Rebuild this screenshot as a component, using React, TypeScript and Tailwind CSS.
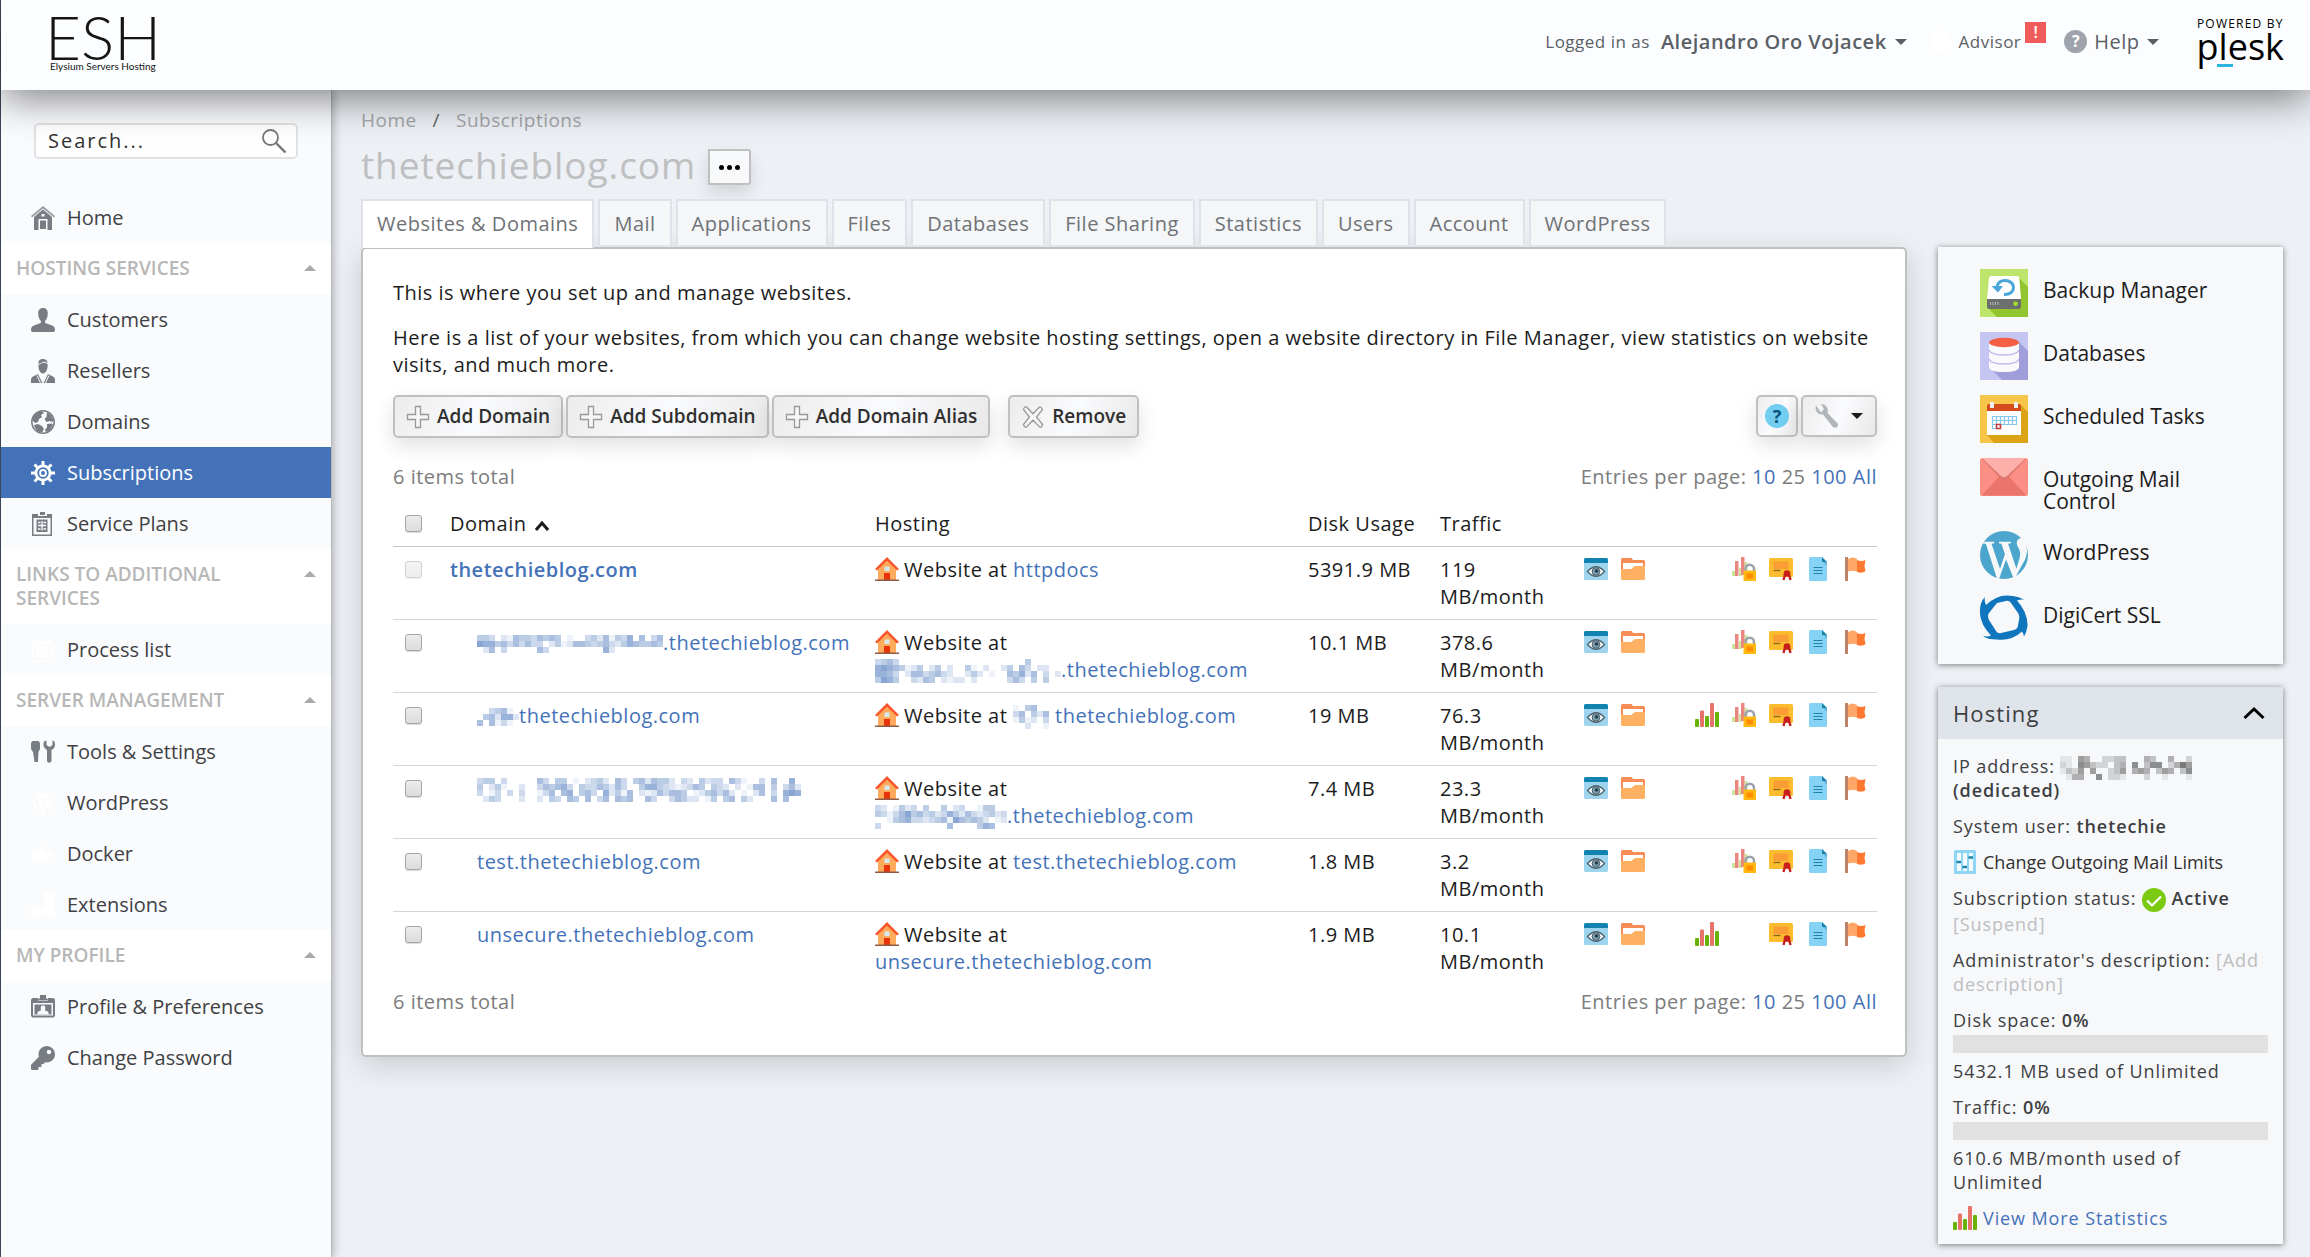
import React, { useState } from 'react';
import { FaDocker, FaKey, FaWordpress } from 'react-icons/fa';

type IconName =
  | 'home' | 'user' | 'reseller' | 'globe' | 'gear' | 'plan' | 'list'
  | 'tools' | 'wordpress' | 'docker' | 'extensions' | 'profile' | 'key';

type Section = { title?: string; items: { label: string; icon: IconName }[] };

const sections: Section[] = [
  { items: [{ label: 'Home', icon: 'home' }] },
  {
    title: 'HOSTING SERVICES',
    items: [
      { label: 'Customers', icon: 'user' },
      { label: 'Resellers', icon: 'reseller' },
      { label: 'Domains', icon: 'globe' },
      { label: 'Subscriptions', icon: 'gear' },
      { label: 'Service Plans', icon: 'plan' },
    ],
  },
  { title: 'LINKS TO ADDITIONAL SERVICES', items: [{ label: 'Process list', icon: 'list' }] },
  {
    title: 'SERVER MANAGEMENT',
    items: [
      { label: 'Tools & Settings', icon: 'tools' },
      { label: 'WordPress', icon: 'wordpress' },
      { label: 'Docker', icon: 'docker' },
      { label: 'Extensions', icon: 'extensions' },
    ],
  },
  {
    title: 'MY PROFILE',
    items: [
      { label: 'Profile & Preferences', icon: 'profile' },
      { label: 'Change Password', icon: 'key' },
    ],
  },
];

const tabs = ['Websites & Domains', 'Mail', 'Applications', 'Files', 'Databases', 'File Sharing', 'Statistics', 'Users', 'Account', 'WordPress'];

// Hidden names are kept as rows of digits, 0 is empty and 9 is the darkest cell
const masks = {
  a: ['4430215443545401003425143605035', '7664535353302412554345324654454', '0250300000530000000006200000000'],
  b: ['3453000000000000000000000400000', '6765412402402004102002405302200', '6653025534532002420100546250302', '4764003254021220200000353040400'],
  c: ['0034510', '0452662', '5051310'],
  d: ['1045000', '3504250', '1412030', '0020010'],
  e: [
    '344030000053044010234205304525442032042330531003050060',
    '402410020035456304335425300466432123540432020155040352',
    '301303030013505604530624150212535540124535201025030676',
    '024300020020430540503505450053003542201404504200050500',
  ],
  f: ['3201423040040230014400', '4313574534236425323423', '0014563323451754542012', '3000000000005000046500'],
  ip: ['1105400223300043004002', '2106532203406036602475', '1325050023504540354036', '0144006022100020010001'],
};

type Row = {
  name: string;
  mask?: keyof typeof masks;
  host: string;
  hostMask?: keyof typeof masks;
  disk: string;
  traffic: string;
  stats?: boolean;
  sslStats?: boolean;
  main?: boolean;
};

const rows: Row[] = [
  { name: 'thetechieblog.com', host: 'httpdocs', disk: '5391.9 MB', traffic: '119', sslStats: true, main: true },
  { name: '.thetechieblog.com', mask: 'a', host: '.thetechieblog.com', hostMask: 'b', disk: '10.1 MB', traffic: '378.6', sslStats: true },
  { name: 'thetechieblog.com', mask: 'c', host: 'thetechieblog.com', hostMask: 'd', disk: '19 MB', traffic: '76.3', stats: true, sslStats: true },
  { name: '', mask: 'e', host: '.thetechieblog.com', hostMask: 'f', disk: '7.4 MB', traffic: '23.3', sslStats: true },
  { name: 'test.thetechieblog.com', host: 'test.thetechieblog.com', disk: '1.8 MB', traffic: '3.2', sslStats: true },
  { name: 'unsecure.thetechieblog.com', host: 'unsecure.thetechieblog.com', disk: '1.9 MB', traffic: '10.1', stats: true },
];

function Mask({ id, color = '#4472b9' }: { id: keyof typeof masks; color?: string }) {
  const grid = masks[id];
  const cell = 6;
  return (
    <svg width={grid[0].length * cell} height={grid.length * cell} className="inline-block align-middle -my-1" fill={color} shapeRendering="crispEdges" aria-hidden="true">
      {grid.map((r, y) =>
        r.split('').map((c, x) => (
          <rect key={`${x}-${y}`} x={x * cell} y={y * cell} width={cell} height={cell} opacity={Number(c) / 11} />
        ))
      )}
    </svg>
  );
}

function NavIcon({ name }: { name: IconName }) {
  const faint = 'w-6 h-6 shrink-0 text-white';
  if (name === 'wordpress') return <FaWordpress className={faint} />;
  if (name === 'docker') return <FaDocker className={faint} />;
  if (name === 'key') return <FaKey className="w-6 h-6 shrink-0" />;
  return (
    <svg viewBox="0 0 24 24" className={name === 'list' || name === 'extensions' ? faint : 'w-6 h-6 shrink-0'} fill="currentColor" aria-hidden="true">
      {name === 'home' && (
        <>
          <path d="M12 0 24 10l-1 1.500L12 2.500 1 11.500 0 10z" opacity=".75" />
          <path d="M12 3.500 3 11v13h4.500V13h9v11H21V11zM10.500 8h3v2.500h-3z" fillRule="evenodd" />
          <path d="M9 14.500h6V23H9z" />
        </>
      )}
      {name === 'user' && (
        <path d="M12 0c3.200 0 4.800 2.200 4.800 5.500 0 3-1 5.800-2.600 7.200v2.300l7 2.500c2 .8 2.800 2.200 2.800 4.500 0 1.500-.6 2-2 2H2c-1.400 0-2-.5-2-2 0-2.300.8-3.700 2.800-4.500l7-2.500v-2.300C8.200 11.300 7.200 8.500 7.200 5.500 7.200 2.200 8.800 0 12 0z" />
      )}
      {name === 'reseller' && (
        <>
          <path d="M7.500 5C7 1.500 9 0 12 0c2.500 0 4.500 1 4.500 4l-3-1.500L9.500 4z" />
          <path d="M7.500 6 10 4.500l3.500-1 3 1.500c.8 4-1.500 9.500-4.500 9.500S7 10 7.500 6z" />
          <path d="M7 15 12 23.500 17 15l5 2.500c1.500.8 2 2 2 3.500v3H0v-3c0-1.500.5-2.700 2-3.500z" />
          <path d="m8 16 4 8 4-8M6 16.500 9.500 24M18 16.500 14.500 24" fill="none" stroke="#fafbfd" strokeWidth="1" />
        </>
      )}
      {name === 'globe' && (
        <>
          <circle cx="12" cy="12" r="11.200" fill="none" stroke="currentColor" strokeWidth="1.500" />
          <path d="M2 8c2-4 5-6.500 9-6.500l2 1.500-3 2 1 2-3 2-1 3-3 1-2-2z" />
          <path d="M3 15l4-1 4 2 2 3-2 3.500C7 22.500 4 19.500 3 15z" />
          <path d="m16 2 4 3 2.500 5-1 2-3-1-3 1-2-3 2-2zM16 14l5-.5 1 1.500-3 5-4 2.500-1-3 2-2z" />
        </>
      )}
      {name === 'gear' && (
        <>
          <g stroke="currentColor" strokeWidth="3">
            <path d="M12 0v24M0 12h24M3.500 3.500l17 17M20.500 3.500l-17 17" />
          </g>
          <circle cx="12" cy="12" r="8.500" />
          <circle cx="12" cy="12" r="4.800" fill="none" stroke="#4472b9" strokeWidth="1.800" />
          <circle cx="12" cy="12" r="2" fill="#4472b9" />
        </>
      )}
      {(name === 'plan' || name === 'list') && (
        <>
          <path d="M1 2h6v2h9V2h5v22H1zM2.500 6v16.500h17V6z" fillRule="evenodd" />
          {name === 'plan' && <path d="M9 0h5v3H9z" />}
          <path d="M5.500 7.500h11v12.500h-11z" />
          <path d="M11 9v9.500M7 10.500h2.500M7 13.500h8M7 17h2.500M12.500 10.500H15M12.500 17H15" stroke="#fafbfd" strokeWidth="1.300" />
        </>
      )}
      {name === 'tools' && (
        <>
          <path d="M1.500 1h6L9 3v6l-1.500 3L7 22H3.500L2 12 0 9V3z" />
          <path d="M13 1.500C11.500 5 13 8.500 16 10v10.500c0 3 4.500 3 4.500 0V10C24 8.500 25 4.500 23 1l-1.500-.5v4.500l-3 2-3-2V.5z" />
        </>
      )}
      {name === 'extensions' && <path d="M0 14h10.500v10H0zM12.500 12H24v12H12.500zM13.500 0H24v11H13.500z" />}
      {name === 'profile' && (
        <>
          <path d="M9 0h6v3l3 2H6l3-2z" />
          <path d="M1.500 3H7v2.500h10V3h5.500L24 4.500V21l-1.500 1.500h-21L0 21V4.500zM2 8v12.500h20V8z" fillRule="evenodd" />
          <path d="M3.500 9.500h17v10h-17z" />
          <path d="m6 19.500 1-3 3-1c-.5-3-.5-5 2-5s2.500 2 2 5l3 1 1 3z" fill="#fafbfd" />
        </>
      )}
    </svg>
  );
}

function HouseIcon() {
  return (
    <svg viewBox="0 0 24 24" className="inline-block w-6 h-6 -mt-1 align-middle mr-[5px]" aria-hidden="true">
      <path d="M3 11 12 2l9 9v12H3z" fill="#ffab5c" />
      <path d="M12 0 24 12l-2 1.500L12 3.800 2 13.500 0 12z" fill="#f9562c" />
      <path d="M9.500 9.500h5v4.500h-5z" fill="#d5e9ef" />
      <path d="M9 16h6v7H9z" fill="#e8330b" />
      <path d="M0 22.500h24V24H0z" fill="#8f5a45" />
    </svg>
  );
}

function StatsIcon() {
  return (
    <svg viewBox="0 0 24 24" className="w-6 h-6" aria-hidden="true">
      <rect x="0" y="16" width="4" height="8" rx="1" fill="#68b106" />
      <rect x="5" y="7.500" width="4" height="16.500" rx="1" fill="#e57368" />
      <rect x="10" y="13" width="4" height="11" rx="1" fill="#68b106" />
      <rect x="15" y="0" width="4" height="24" rx="1" fill="#e57368" />
      <rect x="20" y="9" width="4" height="15" rx="1" fill="#68b106" />
    </svg>
  );
}

function SslStatsIcon() {
  return (
    <svg viewBox="0 0 24 24" className="w-6 h-6" aria-hidden="true">
      <path d="M0 14h3v5H0zM7 11h3v8H7zM12.500 5h3v10h-3z" fill="#cbe59a" />
      <path d="M3 4h3.500v15H3zM9 0h3.500v18H9z" fill="#e8877f" />
      <path d="M13.500 14v-2a4 4 0 0 1 8.500 0v2" fill="none" stroke="#9aa3ab" strokeWidth="2.500" />
      <path d="M11.500 13.500H24V24H11.500z" fill="#ffb912" />
      <path d="M14.500 16.500H21v5h-6.500z" fill="#ff8c00" />
    </svg>
  );
}

function PreviewIcon() {
  return (
    <svg viewBox="0 0 24 24" className="w-6 h-6" aria-hidden="true">
      <rect y="1" width="24" height="22" rx="1.500" fill="#9fd4ee" />
      <path d="M0 6V2.500Q0 1 1.500 1h21Q24 1 24 2.500V6z" fill="#1283b1" />
      <path d="M3.500 14.500q8.500-9.500 17 0-8.500 9.500-17 0z" fill="#f4fafc" stroke="#4d6570" strokeWidth="1.300" />
      <circle cx="12" cy="14.500" r="3.800" fill="#7aa5b8" stroke="#4d5a62" strokeWidth="1" />
      <circle cx="12.500" cy="14" r="1.800" fill="#2b3b45" />
    </svg>
  );
}

function FolderIcon() {
  return (
    <svg viewBox="0 0 24 24" className="w-6 h-6" aria-hidden="true">
      <path d="M0 2.500Q0 1 1.500 1h9L12 3h10.500Q24 3 24 4.500V12H0z" fill="#f68d55" />
      <path d="M2 6h20v6H2z" fill="#fff" />
      <path d="M0 12h10l4-3h10v12.500Q24 23 22.500 23h-21Q0 23 0 21.500z" fill="#ffb062" />
    </svg>
  );
}

function CertIcon() {
  return (
    <svg viewBox="0 0 24 24" className="w-6 h-6" aria-hidden="true">
      <rect y="1" width="24" height="19" rx="1.500" fill="#fbbc2d" />
      <path d="M4.500 4.500h15V12h-15z" fill="#fa9d35" />
      <path d="M4.500 13.500h7" stroke="#8d6420" strokeWidth="1.300" />
      <circle cx="18" cy="16.500" r="3.300" fill="#c81e1e" />
      <path d="m16 17.500-1.500 5.500M20 17.500l1.500 5.500" stroke="#c81e1e" strokeWidth="2.400" />
    </svg>
  );
}

function DocIcon() {
  return (
    <svg viewBox="0 0 24 24" className="w-6 h-6" aria-hidden="true">
      <path d="M3 1.500Q3 0 4.500 0H16l5 5v17.500q0 1.500-1.500 1.500h-15Q3 24 3 22.500z" fill="#86d2f5" />
      <path d="M16 0v5h5z" fill="#1d83ab" />
      <path d="M17 5h4v4z" fill="#62b2d6" />
      <path d="M7.500 10.500h9M7.500 13.500h9M7.500 16.500h9" stroke="#1d83ab" strokeWidth="1.100" />
    </svg>
  );
}

function FlagIcon() {
  return (
    <svg viewBox="0 0 24 24" className="w-6 h-6" aria-hidden="true">
      <path d="M2 0h3v24H2z" fill="#bb8468" />
      <path d="M5 2q5-3 9 0v12.500q-4.500-1.500-9 0z" fill="#ffa768" />
      <path d="M14 3q4 2 8.500 0l-1 6 1 5q-3 3-8.500 1z" fill="#ff7830" />
    </svg>
  );
}

function BackupIcon() {
  return (
    <svg viewBox="0 0 48 48" className="w-12 h-12" aria-hidden="true">
      <path d="M0 0h48v48H0z" fill="#bde56c" />
      <path d="M39 9 48 18v30H17L7 38z" fill="#92c530" />
      <path d="M11 7h26q2 0 2.300 2L41 30H7L9 9q.2-2 2-2z" fill="#fff" />
      <path d="M7 30h34v8q0 2-2 2H9q-2 0-2-2z" fill="#6c706c" />
      <path d="M10.500 33v3M13 33v3M15.500 33v3M18 33v3" stroke="#b9bcb9" strokeWidth="1" />
      <circle cx="35.500" cy="34.800" r="2.300" fill="#a5e02c" />
      <path d="M17 17.500c1-4 4-6 8-6 5 0 8.500 3 8.500 7s-3.500 7-8.500 7h-1" fill="none" stroke="#4ba7da" strokeWidth="3" />
      <path d="m11.500 17 11.500 0-5 6.500z" fill="#4ba7da" />
    </svg>
  );
}

function DatabaseIcon() {
  return (
    <svg viewBox="0 0 48 48" className="w-12 h-12" aria-hidden="true">
      <path d="M0 0h48v48H0z" fill="#c5c5f3" />
      <path d="M39 10 48 19v29H22L9 35z" fill="#9f9edb" />
      <path d="M9 10v25q0 5 15 5t15-5V10z" fill="#fafafd" />
      <path d="M9 18q2 5 15 5t15-5M9 27q2 5 15 5t15-5" fill="none" stroke="#bdbde8" strokeWidth="1.500" />
      <ellipse cx="24" cy="10.500" rx="15" ry="4.700" fill="#f46045" />
    </svg>
  );
}

function CalendarIcon() {
  return (
    <svg viewBox="0 0 48 48" className="w-12 h-12" aria-hidden="true">
      <path d="M0 0h48v48H0z" fill="#f7c548" />
      <path d="m41 10 7 7v31H14l-7-8z" fill="#dda316" />
      <path d="M7 16h34v24H7z" fill="#fff" />
      <path d="M9 9h30q2 0 2 2v5H7v-5q0-2 2-2z" fill="#d54b1b" />
      <path d="M12 7v6M36 7v6" stroke="#eeeef2" strokeWidth="4" />
      <path d="M12.500 21.500h24v8h-24zM12.500 25.500h24M12.500 29.500v4h8M16.500 21.500v12M20.500 21.500v12M24.500 21.500v8M28.500 21.500v8M32.500 21.500v8" fill="none" stroke="#83c7ec" strokeWidth="1.200" />
      <path d="M16.500 29.500h4v4h-4z" fill="none" stroke="#c63c3c" strokeWidth="1.500" />
    </svg>
  );
}

function MailIcon() {
  return (
    <svg viewBox="0 0 48 48" className="w-12 h-12" aria-hidden="true">
      <rect width="48" height="38" rx="2.500" fill="#fb8f86" />
      <path d="M20 18h8l18.500 19.500H1.500z" fill="#eb746b" />
      <path d="m2 1 19 20q3 2.500 6 0L46 1z" fill="#e0776f" />
      <path d="M2 0h44L27 18q-3 2.500-6 0z" fill="#fdb0aa" />
    </svg>
  );
}

function DigicertIcon() {
  return (
    <svg viewBox="0 0 48 48" className="w-12 h-12" fill="#0f75bd" aria-hidden="true">
      <path
        fillRule="evenodd"
        d="M5 3q-1 4 1 8Q18-1 33 2q6 .5 11 3.500-4-.5-7 1 11 12 10.500 26-1 6-3.500 10-.5-3-2-5-10 9.500-25 8Q7 45.500 3 42q5 1 8-.5Q-1 29 0 16q0-8 5-13zM17 9l-8 10q-2 3 0 7l7 11q2 3 5 2l13-3q4-1 4-5l1-5q1-4-1-7L31 9q-2-3-5-2z"
      />
    </svg>
  );
}

function PlusIcon() {
  return (
    <svg viewBox="0 0 24 24" className="w-6 h-6" fill="#f6f6f6" stroke="#999" strokeWidth="1.300" aria-hidden="true">
      <path d="M9.500 1.500h5v8h8v5h-8v8h-5v-8h-8v-5h8z" />
    </svg>
  );
}

function CrossIcon() {
  return (
    <svg viewBox="0 0 24 24" className="w-6 h-6" fill="#f6f6f6" stroke="#999" strokeWidth="1.300" aria-hidden="true">
      <path d="m5.500 2 6.500 6.800L18.500 2Q20 1.500 21.500 4.500L15.500 12l6 7.500q-1 3.500-3 2.500L12 15.200 5.500 22q-2 1-3-2.500l6-7.500-6-7.500Q3.500 1 5.500 2z" />
    </svg>
  );
}

const Caret = () => <span className="inline-block border-x-[6px] border-t-[6px] border-x-transparent border-t-current" />;

const bevel = 'flex items-center border-2 border-[#c0c0c0] rounded-[5px] bg-linear-115 from-[#ececec] via-[#fafbfd] to-[#e8e8e8] shadow-[0_8px_20px_rgba(0,0,0,0.12)]';

function ActionButton({ label, icon }: { label: string; icon: React.ReactNode }) {
  return (
    <button type="button" className={`${bevel} h-[43px] gap-[7px] px-[11px] text-[19px] font-semibold text-[#303030]`}>
      {icon}
      {label}
    </button>
  );
}

function ListSummary() {
  return (
    <div className="flex justify-between text-[#7c7c7c]">
      <span>6 items total</span>
      <span>
        Entries per page: <a href="#10" className="text-[#4472b9]">10</a> 25 <a href="#100" className="text-[#4472b9]">100</a>{' '}
        <a href="#all" className="text-[#4472b9]">All</a>
      </span>
    </div>
  );
}

function Checkbox({ label, disabled }: { label: string; disabled?: boolean }) {
  return (
    <input
      type="checkbox"
      aria-label={label}
      disabled={disabled}
      className="block appearance-none w-[17px] h-[17px] ml-3 rounded-[3px] border border-[#a6a6a6] bg-linear-to-b from-[#ececec] to-[#dcdcdc] shadow-[0_1px_1px_rgba(0,0,0,0.15)] disabled:opacity-50"
    />
  );
}

function Header() {
  return (
    <header className="relative z-20 flex items-center justify-between h-[90px] pb-[7px] pl-[49px] pr-[26px] bg-[#fcfdff] shadow-[0_8px_40px_rgba(0,0,0,0.5)]">
      <a href="#top" className="flex flex-col text-[#151515] font-['Lato',sans-serif]">
        <span className="-ml-[5px] text-[62px] leading-[48px]">
          <span className="font-light">ESH</span>
        </span>
        <span className="text-[10px] leading-3">Elysium Servers Hosting</span>
      </a>
      <div className="flex items-center text-[#5a5f66] text-xl tracking-wide">
        <span className="text-[17px] mr-[11px]">Logged in as</span>
        <button type="button" className="flex items-center gap-[8px] font-semibold">
          Alejandro Oro Vojacek <Caret />
        </button>
        <a href="#advisor" className="flex items-center text-[17px] ml-6">
          <span className="w-5 h-6 rounded-full bg-white mr-2" />
          Advisor
          <span className="w-[21px] h-[21px] mb-[18px] ml-1 bg-[#f05b5b] text-white text-base leading-[21px] font-semibold text-center">!</span>
        </a>
        <button type="button" className="flex items-center gap-[7px] ml-[18px]">
          <span className="w-[23px] h-[23px] rounded-full bg-[#9fa4ac] text-white text-base leading-[23px] font-bold text-center tracking-normal">?</span>
          Help <Caret />
        </button>
        <a href="#plesk" className="relative flex flex-col items-center ml-[38px] pb-1 text-black">
          <span className="text-xs leading-[14px] tracking-widest">POWERED BY</span>
          <span className="text-4xl leading-8 tracking-normal">plesk</span>
          <span className="absolute left-5 bottom-0 w-4 h-[3px] bg-[#28b4de]" />
        </a>
      </div>
    </header>
  );
}

function Sidebar() {
  const [active, setActive] = useState('Subscriptions');
  return (
    <aside className="relative z-10 w-[331px] shrink-0 pt-[33px] bg-[#fafbfd] border-r border-[#b5b7bb] shadow-[2px_0_8px_rgba(0,0,0,0.25)] text-xl">
      <div className="flex items-center h-9 mx-[33px] mb-[33px] pl-3 pr-[10px] border-2 border-[#e0e2e6] rounded-[5px] bg-white">
        <input type="text" aria-label="Search" placeholder="Search..." className="w-full min-w-0 tracking-widest text-[#333] placeholder:text-[#333] outline-none" />
        <button type="button" aria-label="Run search">
          <svg viewBox="0 0 24 24" className="w-6 h-6" fill="none" stroke="#777" strokeWidth="1.800" aria-hidden="true">
            <circle cx="8.500" cy="8.500" r="7.500" />
            <path d="m14 14 9.500 9.500" strokeWidth="2.400" />
          </svg>
        </button>
      </div>
      <nav>
        {sections.map((section, i) => (
          <div key={i}>
            {section.title && (
              <button type="button" className="flex w-full justify-between items-start min-h-[51px] pt-[13px] pb-[14px] pl-[15px] pr-[15px] bg-white text-left text-[19px] leading-6 font-semibold text-[#b7b7b7]">
                <span className="w-[240px]">{section.title}</span>
                <span className="mt-[9px] border-x-[6px] border-b-[6px] border-x-transparent border-b-[#aaa]" />
              </button>
            )}
            {section.items.map((item) => (
              <a
                key={item.label}
                href="#nav"
                onClick={() => setActive(item.label)}
                className={`flex items-center gap-3 h-[51px] pl-[30px] ${active === item.label ? 'bg-[#4472b9] text-white' : 'text-[#787d84]'}`}
              >
                <NavIcon name={item.icon} />
                <span className={active === item.label ? 'text-white' : 'text-[#3f4144]'}>{item.label}</span>
              </a>
            ))}
          </div>
        ))}
      </nav>
    </aside>
  );
}

function DomainTable() {
  return (
    <table className="w-full table-fixed mt-[7px] mb-1 text-left">
      <thead>
        <tr className="h-[49px] border-b border-[#c4c8cb]">
          <th className="w-[57px] pt-[5px]"><Checkbox label="Select all domains" /></th>
          <th className="w-[425px] pt-[5px] font-normal">
            Domain
            <svg viewBox="0 0 14 10" className="inline-block w-[14px] h-[10px] ml-2" fill="none" stroke="currentColor" strokeWidth="3" aria-hidden="true">
              <path d="m1 9 6-7 6 7" />
            </svg>
          </th>
          <th className="pt-[5px] font-normal">Hosting</th>
          <th className="w-[132px] pt-[5px] font-normal">Disk Usage</th>
          <th className="w-[144px] pt-[5px] font-normal">Traffic</th>
          <th className="w-[293px]" aria-label="Tools" />
        </tr>
      </thead>
      <tbody>
        {rows.map((row, i) => (
          <tr key={i} className="h-[73px] align-top border-b border-[#d3d5d7] last:border-0">
            <td className="pt-[14px]"><Checkbox label={`Select ${row.name}`} disabled={row.main} /></td>
            <td className={`pt-[9px] whitespace-nowrap ${row.main ? '' : 'pl-[27px]'}`}>
              <a href="#domain" className={`text-[#4472b9] ${row.main ? 'font-semibold' : ''}`}>
                {row.mask && <Mask id={row.mask} />}
                {row.name}
              </a>
            </td>
            <td className="pt-[9px] pr-6">
              <HouseIcon />
              Website at{' '}
              <a href="#host" className="inline-block text-[#4472b9]">
                {row.hostMask && <Mask id={row.hostMask} />}
                {row.host}
              </a>
            </td>
            <td className="pt-[9px]">{row.disk}</td>
            <td className="pt-[9px] pr-6">{row.traffic} MB/month</td>
            <td className="pt-[10px]">
              <div className="grid grid-cols-[repeat(8,24px)] gap-x-[13px]">
                <a href="#preview" aria-label="Preview"><PreviewIcon /></a>
                <a href="#files" aria-label="Files"><FolderIcon /></a>
                <span />
                {row.stats ? <a href="#stats" aria-label="Statistics"><StatsIcon /></a> : <span />}
                {row.sslStats ? <a href="#ssl" aria-label="SSL statistics"><SslStatsIcon /></a> : <span />}
                <a href="#cert" aria-label="Certificate"><CertIcon /></a>
                <a href="#logs" aria-label="Logs"><DocIcon /></a>
                <a href="#report" aria-label="Report"><FlagIcon /></a>
              </div>
            </td>
          </tr>
        ))}
      </tbody>
    </table>
  );
}

function Shortcuts() {
  const items = [
    { label: 'Backup Manager', icon: <BackupIcon /> },
    { label: 'Databases', icon: <DatabaseIcon /> },
    { label: 'Scheduled Tasks', icon: <CalendarIcon /> },
    { label: 'Outgoing Mail Control', icon: <MailIcon /> },
    {
      label: 'WordPress',
      icon: (
        // The mark without its outer ring
        <svg viewBox="26 26 460 460" className="w-12 h-12" aria-hidden="true">
          <circle cx="256" cy="256" r="230" fill="#4ca5cd" />
          <path
            d="M62 130h100v14l-26 5 82 240 47-142-34-98-24-5v-14h116v14l-28 5 80 238 28-92c22-70-6-100-18-126-18-38 0-75 38-76 60 50 66 130 34 208l-96 172h-16L276 300l-68 186h-18L82 149l-36-5z"
            fill="#f7f8fa"
          />
        </svg>
      ),
    },
    { label: 'DigiCert SSL', icon: <DigicertIcon /> },
  ];
  return (
    <section className="flex flex-col gap-[15px] py-[22px] pl-[42px] pr-10 bg-[#f7f8fa] shadow-[0_1px_6px_rgba(0,0,0,0.5)]">
      {items.map((item) => (
        <a key={item.label} href="#tool" className="flex gap-[15px] text-[21px] leading-[22px] text-[#1c1c1c]">
          <span className="w-12 h-12 shrink-0">{item.icon}</span>
          <span className="max-w-[170px] pt-[10px] pb-1">{item.label}</span>
        </a>
      ))}
    </section>
  );
}

function Usage({ label, text }: { label: string; text: string }) {
  return (
    <div>
      <p>{label}: <b className="font-semibold">0%</b></p>
      <div className="h-[18px] mt-[3px] mb-[6px] bg-[#e1e1e1]" role="progressbar" aria-label={label} aria-valuenow={0} />
      <p>{text}</p>
    </div>
  );
}

function HostingCard() {
  return (
    <section className="bg-[#f7f8fa] shadow-[0_1px_6px_rgba(0,0,0,0.5)] text-[#3d3f42]">
      <h2 className="flex items-center justify-between h-[52px] pl-[15px] pr-[18px] bg-[#dfe3ea] text-[22px] tracking-wider">
        Hosting
        <button type="button" aria-label="Collapse">
          <svg viewBox="0 0 22 14" className="w-[22px] h-[14px]" fill="none" stroke="#000" strokeWidth="3" aria-hidden="true">
            <path d="m1.500 12 9.500-9 9.500 9" />
          </svg>
        </button>
      </h2>
      <div className="flex flex-col gap-3 px-[15px] pt-[15px] pb-[14px] text-lg leading-6 tracking-wider">
        <p>
          IP address: <Mask id="ip" color="#333" /> <b className="font-semibold">(dedicated)</b>
        </p>
        <p>System user: <b className="font-semibold">thetechie</b></p>
        <a href="#limits" className="flex items-center gap-[6px] tracking-normal font-medium text-[#303030]">
          <svg viewBox="0 0 24 24" className="w-6 h-6" aria-hidden="true">
            <rect x="1" width="22" height="24" rx="1.500" fill="#8fd5f5" />
            <path d="M4 3h4v18H4zM10 3h4v18h-4zM16 3h4v18h-4z" fill="#f4fbfe" />
            <path d="M3.500 12H8M9.500 17H14M15.500 7.500H20" stroke="#1d83ab" strokeWidth="2.500" />
          </svg>
          Change Outgoing Mail Limits
        </a>
        <p>
          Subscription status:{' '}
          <svg viewBox="0 0 24 24" className="inline-block w-6 h-6 align-middle" aria-hidden="true">
            <circle cx="12" cy="12" r="12" fill="#7bc910" />
            <path d="m5 12.500 5 5 9-9" fill="none" stroke="#fff" strokeWidth="2.200" />
          </svg>{' '}
          <b className="font-semibold">Active</b>{' '}
          <a href="#suspend" className="block text-[#bcbec0]">[Suspend]</a>
        </p>
        <p>
          Administrator's description: <a href="#add" className="text-[#bcbec0]">[Add description]</a>
        </p>
        <Usage label="Disk space" text="5432.1 MB used of Unlimited" />
        <Usage label="Traffic" text="610.6 MB/month used of Unlimited" />
        <a href="#more" className="flex items-center gap-[6px] text-[#4472b9]">
          <StatsIcon />
          View More Statistics
        </a>
      </div>
    </section>
  );
}

export default function App() {
  return (
    <div className="flex flex-col min-h-screen border-l border-[#414b5c] bg-[#edf0f5] font-['Open_Sans',sans-serif]">
      <Header />
      <div className="flex grow">
        <Sidebar />
        <main className="grow min-w-0 pt-[17px] pb-[10px] pl-[29px] pr-[27px]">
          <nav className="flex text-[19px] leading-[27px] tracking-wide text-[#a3a5a8]" aria-label="Breadcrumb">
            <a href="#home">Home</a>
            <span className="px-4 text-[#666]">/</span>
            <a href="#subscriptions">Subscriptions</a>
          </nav>
          <div className="flex items-center gap-3 mt-[6px] mb-[9px]">
            <h1 className="text-[37px] leading-[50px] tracking-wide text-[#bebfc1]">thetechieblog.com</h1>
            <button type="button" aria-label="More" className="flex items-center justify-center gap-[3px] w-[43px] h-9 mt-1 border-2 border-[#c0c0c0] rounded-r-[3px] bg-[#f8f9fb] shadow-[0_8px_16px_rgba(0,0,0,0.12)]">
              <span className="w-[5px] h-[5px] rounded-full bg-black" />
              <span className="w-[5px] h-[5px] rounded-full bg-black" />
              <span className="w-[5px] h-[5px] rounded-full bg-black" />
            </button>
          </div>
          <div className="flex items-start gap-1 h-12 text-xl leading-[45px] tracking-wide text-[#6f7276]">
            {tabs.map((tab, i) => (
              <a
                key={tab}
                href="#tab"
                className={`relative px-[14px] border-2 border-b-0 border-[#dfe2e8] ${i === 0 ? 'z-[2] h-[49px] bg-white' : 'h-[46px] bg-[#f4f6f8]'}`}
              >
                {tab}
              </a>
            ))}
          </div>
          <div className="flex items-start gap-[31px]">
            <section className="grow min-w-0 pl-[30px] pr-7 pt-[30px] pb-10 bg-white border-2 border-[#c0c0c0] rounded-[5px] shadow-[0_8px_30px_rgba(0,0,0,0.16)] text-xl leading-[27px] tracking-wide text-[#1c1c1c]">
              <p>This is where you set up and manage websites.</p>
              <p className="mt-[18px] mb-[17px]">
                Here is a list of your websites, from which you can change website hosting settings, open a website directory in File Manager, view statistics on website visits, and much more.
              </p>
              <div className="flex gap-[3px] mb-[25px] tracking-normal">
                <ActionButton label="Add Domain" icon={<PlusIcon />} />
                <ActionButton label="Add Subdomain" icon={<PlusIcon />} />
                <ActionButton label="Add Domain Alias" icon={<PlusIcon />} />
                <div className="ml-[15px]">
                  <ActionButton label="Remove" icon={<CrossIcon />} />
                </div>
                <button type="button" aria-label="Help" className={`${bevel} justify-center w-[42px] h-[42px] ml-auto`}>
                  <span className="w-6 h-6 rounded-full bg-[#72cdf0] text-[#08527c] text-lg leading-6 font-bold">?</span>
                </button>
                <button type="button" aria-label="Table settings" className={`${bevel} justify-center gap-3 w-[76px] h-[42px]`}>
                  <svg viewBox="0 0 24 24" className="w-6 h-6" aria-hidden="true">
                    <path d="M1 1.500C-.5 6 2 11 8 10.500l9.500 12c1.500 2 5 1.500 5.500-1 .2-1-.2-2-1-2.800L12.500 9C14 4.500 11 0 6 0l3 5-3 3.500z" fill="#b0b6bb" />
                  </svg>
                  <Caret />
                </button>
              </div>
              <ListSummary />
              <DomainTable />
              <ListSummary />
            </section>
            <aside className="flex flex-col gap-[23px] w-[345px] shrink-0">
              <Shortcuts />
              <HostingCard />
            </aside>
          </div>
        </main>
      </div>
    </div>
  );
}
